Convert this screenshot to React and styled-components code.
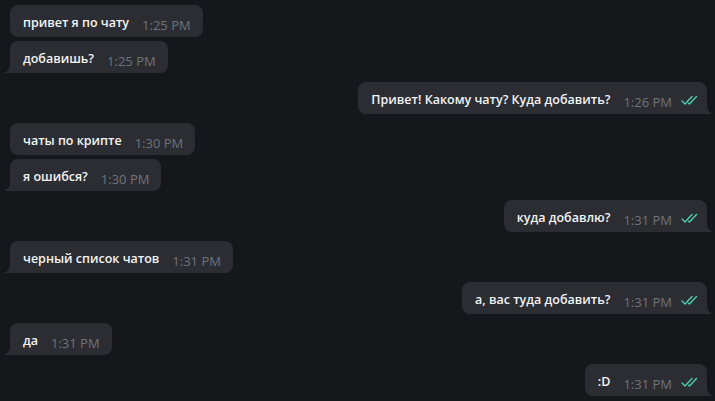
import React from "react";
import styled, { createGlobalStyle, css } from "styled-components";

const Global = createGlobalStyle`
  html, body { margin: 0; padding: 0; background: #16171b; }
  body { font-family: "Open Sans", "Noto Sans", sans-serif; }
`;

const PAGE_BG = "#16171b";
const BG = "#2b2d32";

const Page = styled.div`
  width: 715px;
  height: 401px;
  box-sizing: border-box;
  padding: 5px 8px 0 10px;
  background: ${PAGE_BG};
  display: flex;
  flex-direction: column;
  gap: 9px;
  overflow: hidden;
`;

const Group = styled.div`
  display: flex;
  flex-direction: column;
  gap: 4px;
  align-items: ${(p) => (p.$out ? "flex-end" : "flex-start")};
`;

const tailIn = css`
  border-bottom-left-radius: 0;
  &::before {
    content: "";
    position: absolute;
    left: -6px;
    bottom: 0;
    width: 10px;
    height: 10px;
    background: ${BG};
  }
  &::after {
    content: "";
    position: absolute;
    left: -12px;
    bottom: 0;
    width: 12px;
    height: 12px;
    background: ${PAGE_BG};
    border-bottom-right-radius: 8px;
  }
`;

const tailOut = css`
  border-bottom-right-radius: 0;
  &::before {
    content: "";
    position: absolute;
    right: -5px;
    bottom: 0;
    width: 10px;
    height: 10px;
    background: ${BG};
  }
  &::after {
    content: "";
    position: absolute;
    right: -11px;
    bottom: 0;
    width: 11px;
    height: 12px;
    background: ${PAGE_BG};
    border-bottom-left-radius: 8px;
  }
`;

const Bubble = styled.div`
  position: relative;
  display: inline-flex;
  align-items: flex-end;
  height: 32px;
  box-sizing: border-box;
  padding: 0 ${(p) => (p.$out ? "9px" : "12px")} 4px 13px;
  background: ${BG};
  border-radius: 8px;
  ${(p) => p.$tail && (p.$out ? tailOut : tailIn)}
`;

const Text = styled.span`
  color: #f3f4f6;
  font-size: 12.5px;
  font-weight: 600;
  line-height: 18px;
  margin-bottom: 1px;
  white-space: nowrap;
`;

const Time = styled.span`
  color: #6f737a;
  font-size: 13px;
  font-weight: 400;
  line-height: 16px;
  margin-left: 13px;
  white-space: nowrap;
`;

const Check = styled.svg`
  width: 17px;
  height: 10px;
  margin-left: 9px;
  margin-bottom: 5px;
  flex: none;
`;

const DoubleCheck = () => (
  <Check viewBox="0 0 17 10" fill="none" stroke="#4fcdb1" strokeWidth="1.4" strokeLinecap="round" strokeLinejoin="round">
    <path d="M1 6 L4 9 L11 1.5" />
    <path d="M7.5 8.2 L8.5 9 L15.5 1.5" />
  </Check>
);

const groups = [
  { out: false, msgs: [["привет я по чату", "1:25 PM"], ["добавишь?", "1:25 PM"]] },
  { out: true, msgs: [["Привет! Какому чату? Куда добавить?", "1:26 PM"]] },
  { out: false, msgs: [["чаты по крипте", "1:30 PM"], ["я ошибся?", "1:30 PM"]] },
  { out: true, msgs: [["куда добавлю?", "1:31 PM"]] },
  { out: false, msgs: [["черный список чатов", "1:31 PM"]] },
  { out: true, msgs: [["а, вас туда добавить?", "1:31 PM"]] },
  { out: false, msgs: [["да", "1:31 PM"]] },
  { out: true, msgs: [[":D", "1:31 PM"]] },
];

export default function App() {
  return (
    <>
      <Global />
      <Page>
        {groups.map((g, gi) => (
          <Group key={gi} $out={g.out}>
            {g.msgs.map(([t, time], i) => (
              <Bubble key={i} $out={g.out} $tail={i === g.msgs.length - 1}>
                <Text>{t}</Text>
                <Time>{time}</Time>
                {g.out && <DoubleCheck />}
              </Bubble>
            ))}
          </Group>
        ))}
      </Page>
    </>
  );
}
